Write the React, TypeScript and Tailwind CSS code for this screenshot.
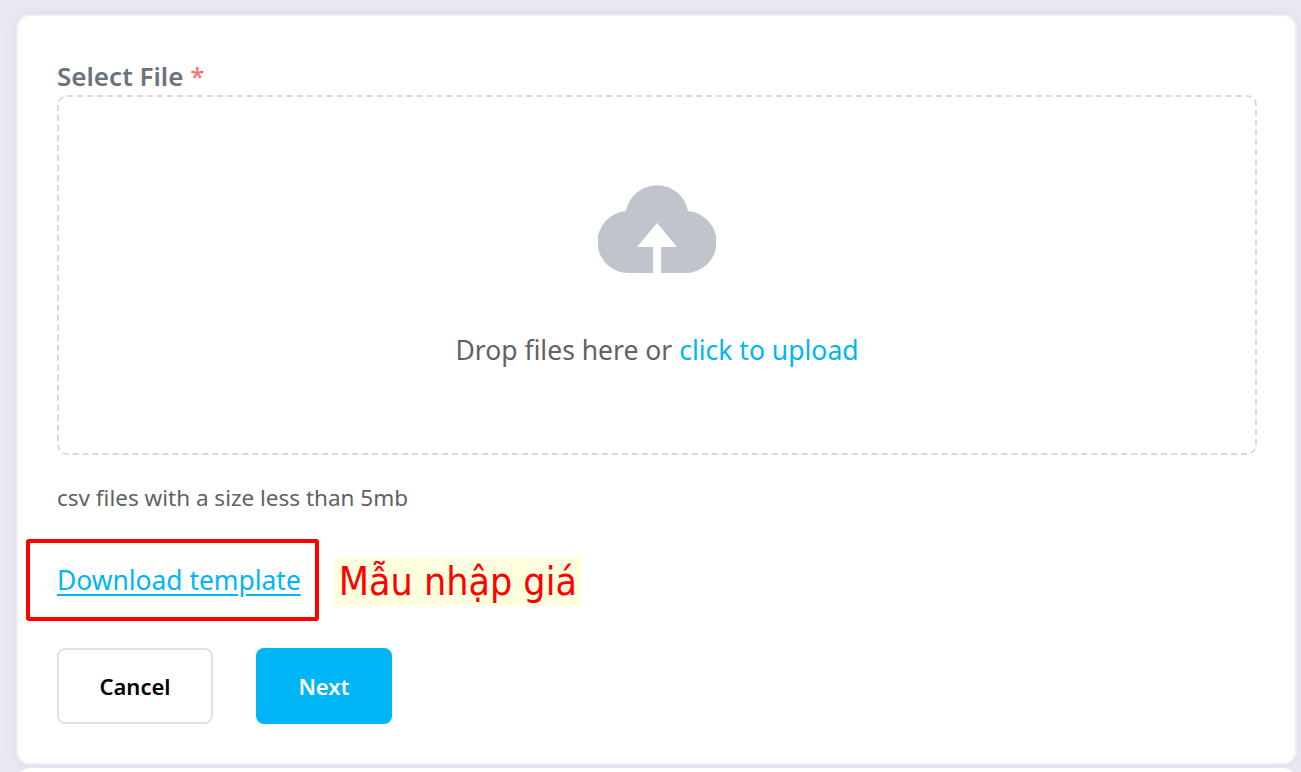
import React from 'react';

const uiFont = "font-['Noto_Sans','Open_Sans',sans-serif]";

function CloudUpload() {
  return (
    <svg width="118" height="88" viewBox="0 0 118 88" className="block">
      <path
        d="M31 88A31 31 0 0 1 28 26.100A31.500 31.500 0 0 1 90 26.100A31 31 0 0 1 87 88H63V62H79L59 38L39 62H55V88H31Z"
        fill="#c0c4cc"
      />
    </svg>
  );
}

export default function App() {
  return (
    <div className={`h-[772px] overflow-hidden bg-[#e9e9f2] pt-[14px] pl-4 pr-1 ${uiFont}`}>
      {/* Upload card */}
      <div className="h-[751px] rounded-[14px] border-2 border-[#eeeef6] bg-white pl-[39px] pr-[39px] pt-[45px] shadow-[0_0_12px_#dcdce9]">
        <label className="block h-[34px] text-[26px] leading-[30px] font-semibold text-[#6b7280]">
          Select File <span className="font-medium text-[#f87171]">*</span>
        </label>

        {/* Drop zone */}
        <div className="flex h-[360px] w-[1200px] flex-col items-center rounded-[10px] border-2 border-dashed border-[#d9d9d9] pt-[88px]">
          <CloudUpload />
          <p className="mt-[60px] text-[26.500px] leading-[34px] text-[#606266]">
            Drop files here or <span className="text-[#00b5f5]">click to upload</span>
          </p>
        </div>

        <p className="mt-[28px] text-[22.500px] leading-[30px] text-[#606266]">csv files with a size less than 5mb</p>

        {/* Template link and annotation */}
        <div className="relative mt-[26px] flex h-[81px] items-center">
          <a className="text-[26.400px] leading-[34px] text-[#00b5f5] underline underline-offset-4">Download template</a>
          <div className="pointer-events-none absolute -left-[31px] top-0 h-[82px] w-[293px] rounded-[3px] border-[4px] border-[#ff0000]" />
          <span className="ml-[33px] mt-[4px] flex h-[49px] items-center bg-[#ffffe0] px-[5px] font-['DejaVu_Sans',sans-serif] text-[39px] leading-[49px] font-stretch-condensed text-[#ff0000]">
            Mẫu nhập giá
          </span>
        </div>

        <div className="mt-[28px] flex gap-[43px]">
          <button className="h-[76px] w-[156px] rounded-[8px] border-2 border-[#dfe1e8] bg-white pt-[1px] text-[22px] font-semibold text-black">
            Cancel
          </button>
          <button className="h-[76px] w-[136px] rounded-[8px] bg-[#00b5f5] pt-[1px] text-[22px] font-semibold text-white">
            Next
          </button>
        </div>
      </div>

      {/* Next card peeking in at the bottom */}
      <div className="mt-[3px] h-[20px] rounded-t-[14px] bg-white" />
    </div>
  );
}
